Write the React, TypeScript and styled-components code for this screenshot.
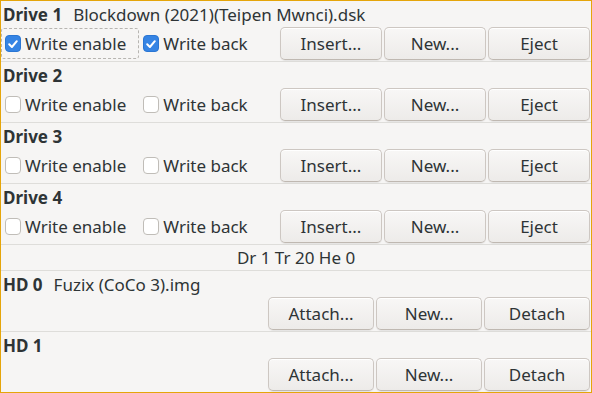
import React from 'react';
import styled, { createGlobalStyle } from 'styled-components';

const GlobalStyle = createGlobalStyle`
  html, body {
    margin: 0;
    padding: 0;
    background: #f6f5f4;
  }
  * {
    box-sizing: border-box;
  }
`;

const Window = styled.div`
  width: 592px;
  height: 393px;
  border: 1px solid #e5a50a;
  background: #f6f5f4;
  font-family: 'Noto Sans', 'DejaVu Sans', sans-serif;
  font-size: 17px;
  color: #2e3436;
  display: flex;
  flex-direction: column;
  overflow: hidden;
`;

const Section = styled.section<{ $last?: boolean }>`
  display: flex;
  flex-direction: column;
  height: ${p => (p.$last ? '60px' : '61px')};
  border-bottom: ${p => (p.$last ? 'none' : '1px solid #deddda')};
`;

const Header = styled.div`
  display: flex;
  align-items: center;
  gap: 11px;
  height: 26px;
  padding-left: 2px;
  white-space: nowrap;
`;

const Name = styled.span`
  font-weight: 700;
`;

const FileName = styled.span`
  font-weight: 400;
`;

const Controls = styled.div<{ $end?: boolean }>`
  display: flex;
  align-items: flex-start;
  justify-content: ${p => (p.$end ? 'flex-end' : 'space-between')};
  height: 34px;
  padding-right: 1px;
`;

const Checks = styled.div`
  display: flex;
  align-items: center;
  height: 33px;
`;

const CheckLabel = styled.label<{ $focused?: boolean }>`
  display: flex;
  align-items: center;
  gap: 4px;
  height: 31px;
  padding: 0 12px 0 3px;
  border: 1px dashed ${p => (p.$focused ? '#b7b5b1' : 'transparent')};
  border-radius: 3px;
  white-space: nowrap;
  cursor: default;
`;

const Box = styled.span<{ $checked?: boolean }>`
  width: 16px;
  height: 17px;
  border-radius: 4px;
  display: inline-flex;
  align-items: center;
  justify-content: center;
  background: ${p => (p.$checked ? '#3584e4' : '#ffffff')};
  border: 1px solid ${p => (p.$checked ? '#2a76d3' : '#c0bdb8')};
`;

const Buttons = styled.div`
  display: flex;
  gap: 2px;
`;

const Button = styled.button<{ $w: number }>`
  width: ${p => p.$w}px;
  height: 33px;
  border: 1px solid #cdc7c2;
  border-bottom-color: #bfb8b1;
  border-radius: 5px;
  background: linear-gradient(to bottom, #f8f7f6, #edebe9);
  box-shadow: inset 0 1px #ffffff, 0 1px 1px rgba(0, 0, 0, 0.07);
  font-family: inherit;
  font-size: 17px;
  color: #2e3436;
  padding: 0;
`;

const Status = styled.div`
  height: 26px;
  display: flex;
  align-items: center;
  justify-content: center;
  border-bottom: 1px solid #deddda;
`;

const Check = ({ checked }: { checked: boolean }) => (
  <Box $checked={checked}>
    {checked && (
      <svg width="12" height="12" viewBox="0 0 12 12">
        <path d="M2.2 6.3 L4.9 9 L9.8 3.2" fill="none" stroke="#fff" strokeWidth="2" strokeLinecap="round" strokeLinejoin="round" />
      </svg>
    )}
  </Box>
);

type Drive = { name: string; file?: string; we: boolean; wb: boolean; focused?: boolean };

const drives: Drive[] = [
  { name: 'Drive 1', file: 'Blockdown (2021)(Teipen Mwnci).dsk', we: true, wb: true, focused: true },
  { name: 'Drive 2', we: false, wb: false },
  { name: 'Drive 3', we: false, wb: false },
  { name: 'Drive 4', we: false, wb: false },
];

const disks = [
  { name: 'HD 0', file: 'Fuzix (CoCo 3).img' },
  { name: 'HD 1' },
];

export default function App() {
  return (
    <>
      <GlobalStyle />
      <Window>
        {drives.map(d => (
          <Section key={d.name}>
            <Header>
              <Name>{d.name}</Name>
              {d.file && <FileName>{d.file}</FileName>}
            </Header>
            <Controls>
              <Checks>
                <CheckLabel $focused={d.focused}>
                  <Check checked={d.we} />
                  Write enable
                </CheckLabel>
                <CheckLabel>
                  <Check checked={d.wb} />
                  Write back
                </CheckLabel>
              </Checks>
              <Buttons>
                <Button $w={102}>Insert...</Button>
                <Button $w={102}>New...</Button>
                <Button $w={102}>Eject</Button>
              </Buttons>
            </Controls>
          </Section>
        ))}
        <Status>Dr 1 Tr 20 He 0</Status>
        {disks.map((h, i) => (
          <Section key={h.name} $last={i === disks.length - 1}>
            <Header>
              <Name>{h.name}</Name>
              {h.file && <FileName>{h.file}</FileName>}
            </Header>
            <Controls $end>
              <Buttons>
                <Button $w={106}>Attach...</Button>
                <Button $w={106}>New...</Button>
                <Button $w={106}>Detach</Button>
              </Buttons>
            </Controls>
          </Section>
        ))}
      </Window>
    </>
  );
}
